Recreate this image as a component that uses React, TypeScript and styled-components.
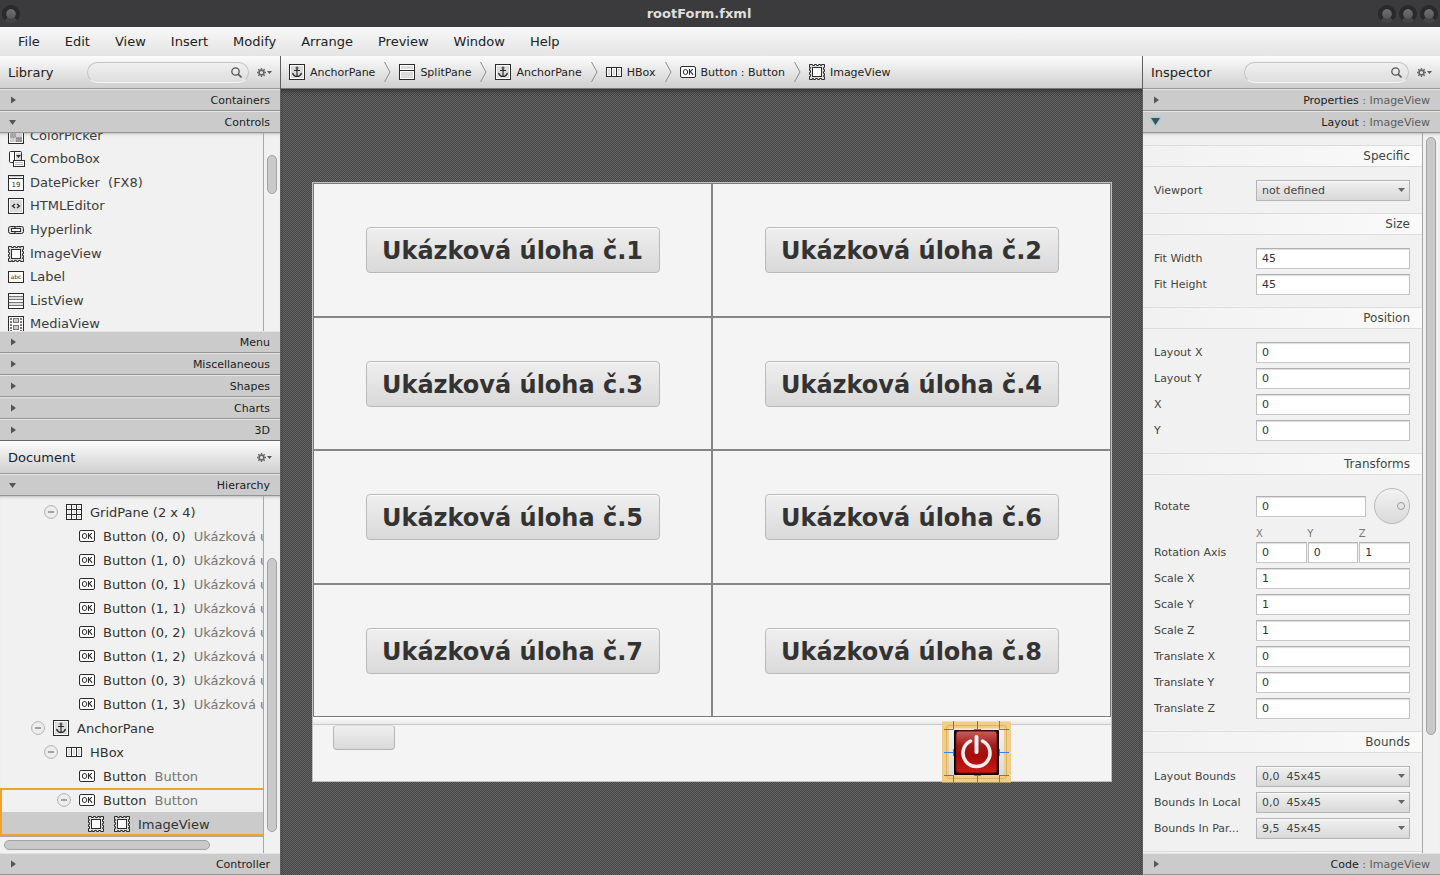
import React from "react";
import styled, { createGlobalStyle } from "styled-components";

const Global = createGlobalStyle`
  * { box-sizing: border-box; }
  body { margin: 0; background: #4b4b4b; }
  body, button, input, select { font-family: "DejaVu Sans", Verdana, sans-serif; }
  ul, nav, h1, h2, h3, p { margin: 0; padding: 0; }
`;

const Window = styled.div`
  display: flex;
  flex-direction: column;
  height: 100vh;
  color: #222;
`;

const TitleBar = styled.header`
  display: flex;
  align-items: center;
  gap: 3px;
  height: 27px;
  flex: none;
  padding: 0 2px;
  background: #3b3b3d;
`;
const WindowTitle = styled.h1`
  flex: 1;
  text-align: center;
  font-size: 13px;
  line-height: 27px;
  color: #dedede;
`;
const WindowButton = styled.button`
  width: 18px;
  height: 18px;
  padding: 0;
  border: 4px solid #29292a;
  border-bottom-color: #454547;
  border-radius: 50%;
  background: linear-gradient(#7c7c7e, #4a4a4c) border-box;
  background-clip: padding-box;
`;

const MenuBar = styled.nav`
  display: flex;
  gap: 25px;
  height: 29px;
  flex: none;
  padding-left: 18px;
  background: linear-gradient(#f8f8f8, #e4e4e4);
`;
const MenuItem = styled.button`
  padding: 0;
  border: 0;
  background: none;
  font-size: 13px;
  color: #222;
`;

const Workspace = styled.div`
  display: grid;
  grid-template-columns: 281px minmax(0, 1fr) 298px;
  flex: 1;
  min-height: 0;
`;
const SidePanel = styled.aside<{ $side: "left" | "right" }>`
  display: flex;
  flex-direction: column;
  min-height: 0;
  background: #f1f1f1;
  ${(p) => (p.$side === "left" ? "border-right" : "border-left")}: 1px solid #5f5f5f;
`;
const PanelPart = styled.section<{ $grow: number }>`
  display: flex;
  flex-direction: column;
  flex: ${(p) => p.$grow} 1 0;
  min-height: 0;
`;
const PanelHeader = styled.div`
  display: flex;
  align-items: center;
  height: 33px;
  flex: none;
  padding: 0 8px;
  border-bottom: 1px solid #999;
  background: linear-gradient(#fcfcfc, #cfcfcf);
`;
const PanelTitle = styled.h2`
  flex: none;
  font-size: 13px;
  font-weight: normal;
`;
const SearchBox = styled.label<{ $width: number }>`
  display: flex;
  align-items: center;
  width: ${(p) => p.$width}px;
  height: 21px;
  margin-left: auto;
  padding: 0 6px 0 10px;
  border: 1px solid #c4c4c4;
  border-bottom-color: #f4f4f4;
  border-radius: 11px;
  background: linear-gradient(#f0f0f0, #dedede);
`;
const SearchInput = styled.input`
  flex: 1;
  min-width: 0;
  padding: 0;
  border: 0;
  outline: 0;
  background: none;
  font-size: 11px;
`;
const GearButton = styled.button`
  display: flex;
  margin-left: 8px;
  padding: 0;
  border: 0;
  background: none;
  &:only-of-type:nth-child(2) { margin-left: auto; }
`;

const AccordionHeader = styled.button<{ $last?: boolean }>`
  display: flex;
  align-items: center;
  justify-content: space-between;
  width: 100%;
  height: 22px;
  flex: none;
  padding: 0 10px 0 8px;
  border: 0;
  border-top: 1px solid #e4e4e4;
  border-bottom: 1px solid ${(p) => (p.$last ? "#666" : "#949494")};
  background: #cbcbcb;
  font-size: 11px;
  color: #1c1c1c;
`;
const Muted = styled.span`
  color: #5c5c5c;
`;

const ScrollFrame = styled.div<{ $wide?: boolean }>`
  display: grid;
  grid-template-columns: minmax(0, 1fr) ${(p) => (p.$wide ? 18 : 17)}px;
  flex: 1;
  min-height: 0;
  overflow: hidden;
  box-shadow: inset 0 3px 3px -2px #bbb;
`;
const ScrollView = styled.div`
  display: flex;
  flex-direction: column;
  min-height: 0;
  overflow: hidden;
`;
const Gutter = styled.div<{ $before: number; $thumb: number; $after: number }>`
  display: grid;
  grid-template-rows: ${(p) => `${p.$before}fr ${p.$thumb}fr ${p.$after}fr`};
  grid-template-columns: 10px;
  min-height: 0;
  padding-left: 3px;
  border-left: 1px solid #a8a8a8;
`;
const Thumb = styled.div`
  grid-row: 2;
  border: 1px solid #a2a2a2;
  border-radius: 5px;
  background: #c9c9c9;
`;
const HorizontalGutter = styled.div`
  display: grid;
  grid-template-columns: 205fr 48fr;
  width: 264px;
  height: 17px;
  flex: none;
  padding: 3px 5px 3px 4px;
  border-top: 1px solid #a8a8a8;
  border-right: 1px solid #a8a8a8;
`;
const HorizontalThumb = styled.div`
  height: 10px;
  border: 1px solid #a2a2a2;
  border-radius: 5px;
  background: #c9c9c9;
`;

const LibraryList = styled.ul`
  display: flex;
  flex-direction: column;
  flex: 1;
  margin: -9px 0 -5px;
  list-style: none;
`;
const LibraryItem = styled.li`
  display: flex;
  align-items: center;
  flex: 1 1 0;
  gap: 6px;
  padding-left: 8px;
  font-size: 13px;
  line-height: 16px;
  color: #3c3c3c;
  white-space: pre;
`;

const Tree = styled.ul`
  padding-top: 4px;
  list-style: none;
`;
const TreeRow = styled.li<{ $indent: number; $mark?: "top" | "bottom" }>`
  display: flex;
  align-items: center;
  gap: 8px;
  height: 24px;
  padding-left: ${(p) => p.$indent}px;
  font-size: 13px;
  color: #333;
  white-space: nowrap;
  ${(p) => p.$mark === "top" && "box-shadow: inset 2px 2px 0 #f0a32c;"}
  ${(p) => p.$mark === "bottom" && "box-shadow: inset 2px -2px 0 #f0a32c; background: #cbcbcb;"}
`;
const ToggleSlot = styled.span`
  display: flex;
  width: 14px;
  flex: none;
`;
const PlaceholderIcon = styled.span`
  display: flex;
  margin-right: 2px;
`;
const TreeNote = styled.span`
  color: #777;
`;

const Editor = styled.main`
  display: flex;
  flex-direction: column;
  min-width: 0;
  min-height: 0;
`;
const Breadcrumbs = styled.nav`
  display: flex;
  align-items: center;
  height: 33px;
  flex: none;
  padding-left: 8px;
  border-bottom: 1px solid #777;
  background: linear-gradient(#fcfcfc, #cfcfcf);
`;
const Crumb = styled.a`
  display: flex;
  align-items: center;
  gap: 5px;
  font-size: 11px;
  color: #222;
  text-decoration: none;
  white-space: nowrap;
`;
const CrumbArrow = styled.svg`
  flex: none;
  margin: 0 8px 0 9px;
`;
const Canvas = styled.div`
  display: flex;
  flex: 1;
  min-height: 0;
  padding: 93px 30px 93px 31px;
  background: repeating-conic-gradient(#424242 0 25%, #686868 0 50%) 0 0 / 2px 2px;
  box-shadow: inset 0 4px 4px -2px #333;
`;
const Stage = styled.div`
  display: flex;
  flex-direction: column;
  flex: 1;
  border: 1px solid #c0bfc0;
  background: #f4f4f4;
`;
const TaskGrid = styled.div`
  display: grid;
  grid-template-columns: 1fr 1fr;
  grid-template-rows: repeat(4, 1fr);
  flex: 1;
  gap: 2px;
  border: 1px solid #7b7b7b;
  background: #868686;
`;
const TaskCell = styled.div`
  display: flex;
  align-items: center;
  justify-content: center;
  padding-top: 1px;
  background: #f4f4f4;
`;
const TaskButton = styled.button`
  width: 294px;
  height: 46px;
  padding: 2px 0 0;
  border: 1px solid #bababa;
  border-radius: 4px;
  background: linear-gradient(#efefef, #d9d9d9);
  box-shadow: inset 0 1px 0 #fbfbfb;
  font-size: 24px;
  font-weight: bold;
  color: #333;
`;
const Splitter = styled.div`
  height: 8px;
  flex: none;
  border-bottom: 1px solid #c8c8c8;
  background: linear-gradient(#fdfdfd, #e9e9e9);
`;
const BottomPane = styled.div`
  display: flex;
  justify-content: space-between;
  align-items: flex-start;
  height: 56px;
  flex: none;
  padding: 0 99px 0 20px;
`;
const BlankButton = styled.button`
  width: 62px;
  height: 25px;
  border: 1px solid #b4b4b4;
  border-top-color: #dedede;
  border-radius: 4px;
  background: linear-gradient(#efefef, #dadada);
`;
const SelectedButton = styled.button`
  position: relative;
  width: 70px;
  height: 56px;
  padding: 0;
  border: 0;
  background: none;
`;
const Selection = styled.svg`
  position: absolute;
  left: 0;
  top: -4px;
`;

const Properties = styled.div`
  padding-top: 12px;
`;
const GroupTitle = styled.h3`
  height: 22px;
  padding-right: 12px;
  border-top: 1px solid #dcdcdc;
  border-bottom: 1px solid #dcdcdc;
  background: linear-gradient(90deg, #f1f1f1, #fafafa);
  font-size: 12px;
  font-weight: normal;
  line-height: 21px;
  text-align: right;
  color: #444;
`;
const GroupRows = styled.div`
  padding: 10px 12px 10px 11px;
`;
const Row = styled.div<{ $tall?: boolean }>`
  display: grid;
  grid-template-columns: 102px minmax(0, 1fr);
  align-items: center;
  height: ${(p) => (p.$tall ? 42 : 26)}px;
`;
const RowLabel = styled.label`
  font-size: 11px;
  color: #444;
`;
const Field = styled.input`
  width: 100%;
  min-width: 0;
  height: 21px;
  padding: 0 5px;
  border: 1px solid #b9b9b9;
  border-color: #b0b0b0 #c0c0c0 #c8c8c8;
  background: #fff;
  box-shadow: inset 0 2px 1px -1px #ddd;
  font-size: 11px;
  color: #333;
`;
const SelectWrap = styled.div`
  display: grid;
  align-items: center;
  > * { grid-area: 1 / 1; }
  > svg { justify-self: end; margin-right: 5px; pointer-events: none; }
`;
const Select = styled.select`
  width: 100%;
  height: 21px;
  padding: 0 5px;
  appearance: none;
  border: 1px solid #b4b4b4;
  border-radius: 0;
  background: linear-gradient(#f0f0f0, #d9d9d9);
  box-shadow: inset 0 1px 0 #fafafa;
  font-size: 11px;
  color: #444;
  white-space: pre;
`;
const RotateControls = styled.div`
  display: flex;
  align-items: center;
  gap: 8px;
`;
const Dial = styled.button`
  display: flex;
  align-items: center;
  justify-content: flex-end;
  width: 36px;
  height: 36px;
  flex: none;
  padding: 0 4px;
  border: 1px solid #b9b9b9;
  border-radius: 50%;
  background: linear-gradient(#f2f2f2, #dadada);
`;
const DialKnob = styled.span`
  width: 8px;
  height: 8px;
  border: 1px solid #999;
  border-radius: 50%;
`;
const AxisNames = styled.div`
  display: grid;
  grid-template-columns: repeat(3, 1fr);
  height: 12px;
  padding-left: 102px;
  font-size: 10px;
  line-height: 14px;
  color: #777;
`;
const AxisFields = styled.div`
  display: grid;
  grid-template-columns: repeat(3, 1fr);
  gap: 1px;
`;

type IconName =
  | "anchor" | "split" | "hbox" | "ok" | "image" | "color" | "combo" | "date"
  | "html" | "link" | "abc" | "list" | "media" | "grid";

const ink = "#2b2b2b";
const drawings: Record<IconName, React.ReactNode> = {
  anchor: (
    <>
      <rect x=".5" y=".5" width="15" height="15" fill="#fff" stroke={ink} />
      <rect x="2" y="2" width="12" height="12" fill="#dcdcdc" />
      <circle cx="8" cy="4" r="1" fill="none" stroke={ink} />
      <path d="M8 5v7.500M5 6.500h6M4 9.500c.5 2 1.800 3 4 3s3.500-1 4-3" fill="none" stroke={ink} strokeWidth="1.200" />
      <path d="M3.200 8.500l2 2h-2zM12.800 8.500l-2 2h2z" fill={ink} />
    </>
  ),
  split: (
    <>
      <rect x=".5" y=".5" width="15" height="15" fill="#fff" stroke={ink} />
      <path d="M2 2h12v3H2zM2 8h12v6H2z" fill="#dcdcdc" />
      <path d="M1 6.500h14" stroke={ink} />
    </>
  ),
  hbox: (
    <>
      <rect x=".5" y="3.500" width="15" height="9" fill="#fff" stroke={ink} />
      <path d="M2 5h2v6H2zM7 5h2v6H7zM12 5h2v6h-2z" fill="#dcdcdc" />
      <path d="M5.500 4v8M10.500 4v8" stroke={ink} />
    </>
  ),
  ok: (
    <>
      <rect x=".5" y="2.500" width="15" height="11" rx="1.500" fill="#fff" stroke={ink} />
      <ellipse cx="5.500" cy="8" rx="2.200" ry="2.500" fill="none" stroke={ink} />
      <path d="M9.500 5v6M12.800 5.200L9.800 8.200M10.500 7.500l2.600 3.300" fill="none" stroke={ink} strokeWidth="1.100" />
    </>
  ),
  image: (
    <>
      <path
        d="M.5.5h3v1h2v-1h2v1h2v-1h2v1h1v-1h3v3h-1v2h1v2h-1v2h1v2h-1v1h1v3h-3v-1h-2v1h-2v-1h-2v1h-2v-1h-1v1h-3v-3h1v-2h-1v-2h1v-2h-1v-2h1v-1h-1z"
        fill="#ddd"
        stroke={ink}
      />
      <rect x="3.500" y="3.500" width="9" height="9" fill="#fff" stroke={ink} />
    </>
  ),
  color: (
    <>
      <rect x=".5" y=".5" width="15" height="15" fill="#fff" stroke={ink} />
      <path d="M2 2h6v4H2z" fill="#aaa" />
      <path d="M8 2h6v4H8z" fill="#ddd" />
      <path d="M2 6h6v4H2zM8 10h6v4H8z" fill="#a6a6a6" />
      <path d="M8 5h6v5H8zM2 10h6v4H2z" fill="#d0d0d0" />
      <path d="M8 9h6v5H8z" fill="#999" />
    </>
  ),
  combo: (
    <>
      <rect x="1.500" y=".5" width="12" height="11" rx="1" fill="#fff" stroke={ink} />
      <path d="M6.500 1v10" stroke={ink} />
      <path d="M8 2h5v7H8z" fill="#ddd" />
      <path d="M8 4h5l-2.500 3z" fill={ink} />
      <rect x="5.500" y="9.500" width="11" height="6" fill="#fff" stroke={ink} />
      <path d="M7 11.500h8M7 13.500h8" stroke="#bbb" />
    </>
  ),
  date: (
    <>
      <rect x=".5" y=".5" width="15" height="15" fill="#fff" stroke={ink} />
      <path d="M2 1.500h12" stroke="#ccc" />
      <path d="M1 3.500h14" stroke={ink} />
      <text x="8" y="12" fontSize="7" textAnchor="middle" fill={ink}>19</text>
    </>
  ),
  html: (
    <>
      <rect x=".5" y=".5" width="15" height="15" fill="#fff" stroke={ink} />
      <rect x="2" y="2" width="12" height="12" fill="#dcdcdc" />
      <path d="M7 6L4.500 8 7 10M9 6l2.500 2L9 10" fill="none" stroke={ink} strokeWidth="1.300" />
    </>
  ),
  link: (
    <>
      <rect x=".5" y="4.500" width="9" height="7" rx="2" fill="#ddd" stroke={ink} />
      <rect x="6.500" y="4.500" width="9" height="7" rx="2" fill="#ddd" stroke={ink} />
      <rect x="3.500" y="6.500" width="9" height="3" fill="#fff" stroke={ink} />
    </>
  ),
  abc: (
    <>
      <rect x=".5" y="2.500" width="15" height="11" fill="#fff" stroke={ink} />
      <text x="8" y="10" fontSize="6" textAnchor="middle" fill={ink}>abc</text>
    </>
  ),
  list: (
    <>
      <rect x=".5" y=".5" width="15" height="15" fill="#fff" stroke={ink} />
      <path d="M1 3.500h14M1 6.500h14M1 9.500h14M1 12.500h14" stroke="#777" />
      <path d="M1 5h14M1 11h14" stroke="#ddd" strokeWidth="2" />
    </>
  ),
  media: (
    <>
      <rect x=".5" y=".5" width="15" height="15" fill="#fff" stroke={ink} />
      <rect x="5.500" y="2.500" width="5" height="4" fill="#ccc" stroke="#777" />
      <rect x="5.500" y="9.500" width="5" height="4" fill="#ccc" stroke="#777" />
      <path d="M3 2v13M13 2v13" stroke="#777" strokeWidth="2" strokeDasharray="2 1" />
    </>
  ),
  grid: (
    <>
      <rect x=".5" y=".5" width="15" height="15" fill="#fff" stroke={ink} />
      <path d="M2 2h2v2H2zM7 2h2v2H7zM12 2h2v2h-2zM2 7h2v2H2zM7 7h2v2H7zM12 7h2v2h-2zM2 12h2v2H2zM7 12h2v2H7zM12 12h2v2h-2z" fill="#ddd" />
      <path d="M5.500 1v14M10.500 1v14M1 5.500h14M1 10.500h14" stroke={ink} />
    </>
  ),
};

const IconSvg = styled.svg`
  display: block;
  flex: none;
  overflow: visible;
`;
const Icon = ({ name }: { name: IconName }) => (
  <IconSvg width="16" height="16" viewBox="0 0 16 16" aria-hidden="true">{drawings[name]}</IconSvg>
);

const Arrow = ({ open, glow }: { open?: boolean; glow?: boolean }) => (
  <IconSvg width="10" height="10" viewBox="0 0 10 10" aria-hidden="true">
    {glow && <path d="M0 1h9L4.500 8z" fill="#7fc8dc" stroke="#9fd0de" strokeWidth="3" strokeLinejoin="round" />}
    {open ? <path d={glow ? "M0 1h9L4.500 8z" : "M1 3h7L4.500 8z"} fill={glow ? "#3f5157" : "#555"} /> : <path d="M3 1.500v7l5-3.500z" fill="#555" />}
  </IconSvg>
);

const Gear = () => (
  <svg width="15" height="9" viewBox="0 0 15 9" aria-hidden="true">
    <circle cx="4.500" cy="4.500" r="2.400" fill="none" stroke="#666" strokeWidth="1.600" />
    <path d="M4.500 0v1.500M4.500 7.500V9M0 4.500h1.500M7.500 4.500H9M1.300 1.300l1 1M6.700 6.700l1 1M7.700 1.300l-1 1M2.300 6.700l-1 1" stroke="#666" strokeWidth="1.400" />
    <path d="M10 3h5l-2.500 3z" fill="#555" />
  </svg>
);

const Search = ({ width, label }: { width: number; label: string }) => (
  <SearchBox $width={width}>
    <SearchInput type="text" aria-label={label} />
    <svg width="11" height="11" viewBox="0 0 11 11" aria-hidden="true">
      <circle cx="4.500" cy="4.500" r="3.700" fill="none" stroke="#555" strokeWidth="1.300" />
      <path d="M7.200 7.200l3.300 3.300" stroke="#555" strokeWidth="1.600" />
    </svg>
  </SearchBox>
);

const Minus = () => (
  <svg width="14" height="14" viewBox="0 0 14 14" aria-hidden="true">
    <circle cx="7" cy="7" r="6.400" fill="#ededed" stroke="#b0b0b0" />
    <path d="M4 7h6" stroke="#888" strokeWidth="1.500" />
  </svg>
);

const menus = ["File", "Edit", "View", "Insert", "Modify", "Arrange", "Preview", "Window", "Help"];

const crumbs: [IconName, string][] = [
  ["anchor", "AnchorPane"],
  ["split", "SplitPane"],
  ["anchor", "AnchorPane"],
  ["hbox", "HBox"],
  ["ok", "Button : Button"],
  ["image", "ImageView"],
];

const controls: [IconName, string][] = [
  ["color", "ColorPicker"],
  ["combo", "ComboBox"],
  ["date", "DatePicker  (FX8)"],
  ["html", "HTMLEditor"],
  ["link", "Hyperlink"],
  ["image", "ImageView"],
  ["abc", "Label"],
  ["list", "ListView"],
  ["media", "MediaView"],
];

const cells = ["0, 0", "1, 0", "0, 1", "1, 1", "0, 2", "1, 2", "0, 3", "1, 3"];

interface NodeProps {
  depth: number;
  icon: IconName;
  text: string;
  note?: string;
  open?: boolean;
  mark?: "top" | "bottom";
}
const TreeNode = ({ depth, icon, text, note, open, mark }: NodeProps) => (
  <TreeRow $indent={31 + depth * 13} $mark={mark}>
    <ToggleSlot>{open && <Minus />}</ToggleSlot>
    <Icon name={icon} />
    <span>{text}</span>
    {note && <TreeNote>{note}</TreeNote>}
  </TreeRow>
);

const TextRow = ({ label, value }: { label: string; value: string }) => {
  const id = React.useId();
  return (
    <Row>
      <RowLabel htmlFor={id}>{label}</RowLabel>
      <Field id={id} type="text" defaultValue={value} />
    </Row>
  );
};

const SelectRow = ({ label, value }: { label: string; value: string }) => {
  const id = React.useId();
  return (
    <Row>
      <RowLabel htmlFor={id}>{label}</RowLabel>
      <SelectWrap>
        <Select id={id}><option>{value}</option></Select>
        <svg width="7" height="4" viewBox="0 0 7 4" aria-hidden="true"><path d="M0 0h7L3.500 4z" fill="#666" /></svg>
      </SelectWrap>
    </Row>
  );
};

const PowerSelection = () => (
  <Selection width="70" height="62" viewBox="0 0 70 62" aria-hidden="true">
    <defs>
      <linearGradient id="red" x1="0" y1="0" x2="0" y2="1">
        <stop offset="0" stopColor="#c4605c" />
        <stop offset=".35" stopColor="#a31a18" />
        <stop offset=".6" stopColor="#a80c0a" />
        <stop offset="1" stopColor="#cc1a16" />
      </linearGradient>
      <linearGradient id="face" x1="0" y1="0" x2="0" y2="1">
        <stop offset="0" stopColor="#f2f2f2" />
        <stop offset="1" stopColor="#d9d9d9" />
      </linearGradient>
    </defs>
    <rect x="5" y="5" width="59" height="52" fill="url(#face)" />
    <rect x="3.500" y="4" width="62" height="54" fill="none" stroke="#f2cd86" strokeWidth="7" />
    <rect x="4.500" y="4.500" width="60" height="53" rx="3" fill="none" stroke="#d9b36d" />
    <rect x="12" y="9" width="45" height="45" rx="1" fill="#0b0000" />
    <rect x="14" y="10" width="41" height="42" rx="3" fill="url(#red)" stroke="#7a0d0b" />
    <path d="M28.500 20a13.500 13.500 0 1 0 12 0" fill="none" stroke="#f1eded" strokeWidth="3.500" strokeLinecap="round" />
    <path d="M34.500 16v15" stroke="#f1eded" strokeWidth="4" strokeLinecap="round" />
    <path
      d="M11.500 0v9M35.500 0v8M57.500 0v9M11.500 54v8M35.500 54v8M57.500 54v8M2 8.500h9M58 8.500h9M2 31.500h9M58 31.500h9M2 54.500h9M58 54.500h9M32 8.500h7M32 54.500h7M11.500 28v7M57.500 28v7"
      stroke="#2e86f5"
    />
  </Selection>
);

const App = () => (
  <>
    <Global />
    <Window>
      <TitleBar>
        <WindowButton aria-label="Window menu" />
        <WindowTitle>rootForm.fxml</WindowTitle>
        <WindowButton aria-label="Minimize" />
        <WindowButton aria-label="Maximize" />
        <WindowButton aria-label="Close" />
      </TitleBar>
      <MenuBar>
        {menus.map((m) => <MenuItem key={m}>{m}</MenuItem>)}
      </MenuBar>
      <Workspace>
        <SidePanel $side="left">
          <PanelPart $grow={385}>
            <PanelHeader>
              <PanelTitle>Library</PanelTitle>
              <Search width={162} label="Search library" />
              <GearButton aria-label="Library options"><Gear /></GearButton>
            </PanelHeader>
            <AccordionHeader><Arrow />Containers</AccordionHeader>
            <AccordionHeader><Arrow open />Controls</AccordionHeader>
            <ScrollFrame>
              <ScrollView>
                <LibraryList>
                  {controls.map(([icon, name]) => (
                    <LibraryItem key={name}><Icon name={icon} />{name}</LibraryItem>
                  ))}
                </LibraryList>
              </ScrollView>
              <Gutter $before={22} $thumb={39} $after={136}><Thumb /></Gutter>
            </ScrollFrame>
            {["Menu", "Miscellaneous", "Shapes", "Charts", "3D"].map((name) => (
              <AccordionHeader key={name} $last={name === "3D"}><Arrow />{name}</AccordionHeader>
            ))}
          </PanelPart>
          <PanelPart $grow={434}>
            <PanelHeader>
              <PanelTitle>Document</PanelTitle>
              <GearButton aria-label="Document options"><Gear /></GearButton>
            </PanelHeader>
            <AccordionHeader><Arrow open />Hierarchy</AccordionHeader>
            <ScrollFrame>
              <ScrollView>
                <Tree>
                  <TreeNode depth={1} icon="grid" text="GridPane (2 x 4)" open />
                  {cells.map((c, i) => (
                    <TreeNode key={c} depth={2} icon="ok" text={`Button (${c})`} note={`Ukázková úloha č.${i + 1}`} />
                  ))}
                  <TreeNode depth={0} icon="anchor" text="AnchorPane" open />
                  <TreeNode depth={1} icon="hbox" text="HBox" open />
                  <TreeNode depth={2} icon="ok" text="Button" note="Button" />
                  <TreeNode depth={2} icon="ok" text="Button" note="Button" open mark="top" />
                  <TreeRow $indent={88} $mark="bottom">
                    <PlaceholderIcon><Icon name="image" /></PlaceholderIcon>
                    <Icon name="image" />
                    <span>ImageView</span>
                  </TreeRow>
                </Tree>
              </ScrollView>
              <Gutter $before={62} $thumb={274} $after={4}><Thumb /></Gutter>
            </ScrollFrame>
            <HorizontalGutter><HorizontalThumb /></HorizontalGutter>
            <AccordionHeader><Arrow />Controller</AccordionHeader>
          </PanelPart>
        </SidePanel>

        <Editor>
          <Breadcrumbs>
            {crumbs.map(([icon, name], i) => (
              <React.Fragment key={i}>
                {i > 0 && (
                  <CrumbArrow width="7" height="20" viewBox="0 0 7 20" aria-hidden="true">
                    <path d="M.5 0l5.500 10L.5 20" fill="none" stroke="#8c8c8c" />
                  </CrumbArrow>
                )}
                <Crumb href="#"><Icon name={icon} />{name}</Crumb>
              </React.Fragment>
            ))}
          </Breadcrumbs>
          <Canvas>
            <Stage>
              <TaskGrid>
                {cells.map((c, i) => (
                  <TaskCell key={c}><TaskButton>Ukázková úloha č.{i + 1}</TaskButton></TaskCell>
                ))}
              </TaskGrid>
              <Splitter />
              <BottomPane>
                <BlankButton aria-label="Button" />
                <SelectedButton aria-label="Power"><PowerSelection /></SelectedButton>
              </BottomPane>
            </Stage>
          </Canvas>
        </Editor>

        <SidePanel $side="right">
          <PanelHeader>
            <PanelTitle>Inspector</PanelTitle>
            <Search width={165} label="Search inspector" />
            <GearButton aria-label="Inspector options"><Gear /></GearButton>
          </PanelHeader>
          <AccordionHeader><Arrow /><span>Properties <Muted>: ImageView</Muted></span></AccordionHeader>
          <AccordionHeader><Arrow open glow /><span>Layout <Muted>: ImageView</Muted></span></AccordionHeader>
          <ScrollFrame $wide>
            <ScrollView>
              <Properties>
                <GroupTitle>Specific</GroupTitle>
                <GroupRows><SelectRow label="Viewport" value="not defined" /></GroupRows>
                <GroupTitle>Size</GroupTitle>
                <GroupRows>
                  <TextRow label="Fit Width" value="45" />
                  <TextRow label="Fit Height" value="45" />
                </GroupRows>
                <GroupTitle>Position</GroupTitle>
                <GroupRows>
                  {["Layout X", "Layout Y", "X", "Y"].map((l) => <TextRow key={l} label={l} value="0" />)}
                </GroupRows>
                <GroupTitle>Transforms</GroupTitle>
                <GroupRows>
                  <Row $tall>
                    <RowLabel htmlFor="rotate">Rotate</RowLabel>
                    <RotateControls>
                      <Field id="rotate" type="text" defaultValue="0" />
                      <Dial aria-label="Rotation dial"><DialKnob /></Dial>
                    </RotateControls>
                  </Row>
                  <AxisNames><span>X</span><span>Y</span><span>Z</span></AxisNames>
                  <Row>
                    <RowLabel htmlFor="axis-x">Rotation Axis</RowLabel>
                    <AxisFields>
                      <Field id="axis-x" type="text" defaultValue="0" />
                      <Field type="text" aria-label="Rotation axis Y" defaultValue="0" />
                      <Field type="text" aria-label="Rotation axis Z" defaultValue="1" />
                    </AxisFields>
                  </Row>
                  {["Scale X", "Scale Y", "Scale Z"].map((l) => <TextRow key={l} label={l} value="1" />)}
                  {["Translate X", "Translate Y", "Translate Z"].map((l) => <TextRow key={l} label={l} value="0" />)}
                </GroupRows>
                <GroupTitle>Bounds</GroupTitle>
                <GroupRows>
                  <SelectRow label="Layout Bounds" value={"0,0\u00a0 45x45"} />
                  <SelectRow label="Bounds In Local" value={"0,0\u00a0 45x45"} />
                  <SelectRow label="Bounds In Par..." value={"9,5\u00a0 45x45"} />
                </GroupRows>
                <GroupTitle />
              </Properties>
            </ScrollView>
            <Gutter $before={4} $thumb={598} $after={118}><Thumb /></Gutter>
          </ScrollFrame>
          <AccordionHeader><Arrow /><span>Code <Muted>: ImageView</Muted></span></AccordionHeader>
        </SidePanel>
      </Workspace>
    </Window>
  </>
);

export default App;
